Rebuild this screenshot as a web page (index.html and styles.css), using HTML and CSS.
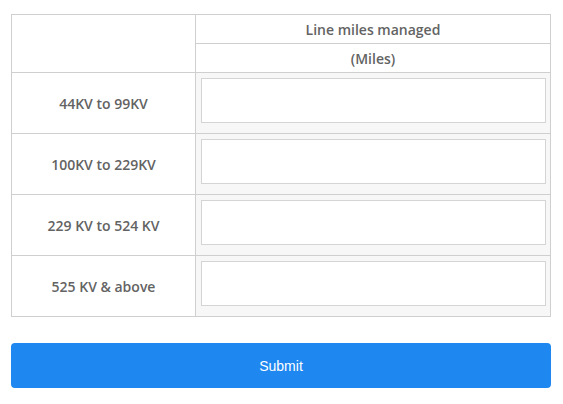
FILE: index.html
```html
<!DOCTYPE html>
<html lang="en">
<head>
    <meta charset="UTF-8">
    <meta name="viewport" content="width=device-width, initial-scale=1.0">
    <title>Line miles</title>
    <link rel="stylesheet" href="styles.css">
</head>
<body>
    <div class="container">
        <table class="miles-table">
            <tr class="head-row">
                <td class="corner" rowspan="2"></td>
                <th>Line miles managed</th>
            </tr>
            <tr class="head-row">
                <th>(Miles)</th>
            </tr>
            <tr>
                <td class="label">44KV to 99KV</td>
                <td class="field"><input type="text" class="miles-input"></td>
            </tr>
            <tr>
                <td class="label">100KV to 229KV</td>
                <td class="field"><input type="text" class="miles-input"></td>
            </tr>
            <tr>
                <td class="label">229 KV to 524 KV</td>
                <td class="field"><input type="text" class="miles-input"></td>
            </tr>
            <tr>
                <td class="label">525 KV &amp; above</td>
                <td class="field"><input type="text" class="miles-input"></td>
            </tr>
        </table>
        <button class="submit-button">Submit</button>
    </div>
</body>
</html>
```

FILE: styles.css
```css
body {
    font-family: "Open Sans", Arial, sans-serif;
    margin: 0;
    padding: 0;
    background: #fff;
    color: #666;
}
.container {
    width: 540px;
    margin: 14px 0 0 11px;
}
.miles-table {
    width: 540px;
    border-collapse: collapse;
    table-layout: fixed;
}
.miles-table td, .miles-table th {
    border: 1px solid #cfcfcf;
    padding: 0;
    font-size: 14px;
    font-weight: 600;
    text-align: center;
    color: #636363;
}
.head-row th {
    height: 28px;
    background: #fff;
}
.corner {
    width: 183px;
    background: #fff;
}
.label {
    height: 60px;
    background: #fff;
}
.field {
    background: #f7f7f7;
    padding: 5px 4px 10px 5px !important;
}
.miles-input {
    display: block;
    box-sizing: border-box;
    width: 100%;
    height: 45px;
    margin: 0;
    border: 1px solid #d4d4d4;
    background: #fff;
    outline: none;
}
.submit-button {
    display: block;
    width: 540px;
    height: 45px;
    margin-top: 26px;
    border: none;
    border-radius: 4px;
    background: #1e87f0;
    color: #fff;
    font-family: Arial, "Liberation Sans", sans-serif;
    font-size: 14px;
    cursor: pointer;
}
```
